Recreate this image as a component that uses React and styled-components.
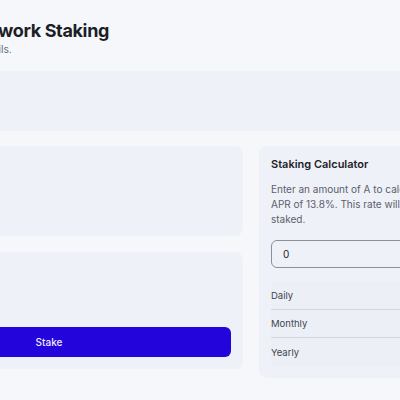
import React from 'react';
import styled, { createGlobalStyle } from 'styled-components';

const GlobalStyle = createGlobalStyle`
  html, body {
    margin: 0;
    padding: 0;
    background: #f6f7fb;
    overflow: hidden;
    font-family: Inter, "Noto Sans", sans-serif;
  }
`;

function App() {
  return <>
    <GlobalStyle />
    <Page>
      <Header>
        <Title>Cosmos Hub Network Staking</Title>
        <Subtitle>Stake A tokens and view details.</Subtitle>
      </Header>

      <Banner />

      <Columns>
        <Column>
          <Card $height="90px" />
          <Card $height="117px">
            <StakeButton>Stake</StakeButton>
          </Card>
        </Column>

        <Calculator>
          <CardTitle>Staking Calculator</CardTitle>
          <Description>
            Enter an amount of A to calculate your estimated rewards at the current<br />
            APR of 13.8%. This rate will change depending on the total amount of A<br />
            staked.
          </Description>
          <AmountInput defaultValue="0" />
          <Table>
            <Row><Label>Daily</Label><Value>0 A</Value></Row>
            <Row><Label>Monthly</Label><Value>0 A</Value></Row>
            <Row $last><Label>Yearly</Label><Value>0 A</Value></Row>
          </Table>
        </Calculator>
      </Columns>
    </Page>
  </>;
}

export default App;

const Page = styled.div`
  width: 816px;
  margin-left: -157px;
  padding: 20px 12px;
  box-sizing: border-box;
`

const Header = styled.div`
  margin-bottom: 15px;
`

const Title = styled.h1`
  margin: 0;
  font-size: 18px;
  line-height: 22px;
  font-weight: 700;
  letter-spacing: -0.35px;
  color: #1c1f26;
  white-space: nowrap;
`

const Subtitle = styled.p`
  margin: 0;
  font-size: 10.3px;
  line-height: 14px;
  color: #6b7079;
  white-space: nowrap;
`

const Banner = styled.div`
  height: 60px;
  border-radius: 8px;
  background: #eef1f8;
  margin-bottom: 15px;
`

const Columns = styled.div`
  display: grid;
  grid-template-columns: 388px 388px;
  gap: 16px;
  align-items: start;
`

const Column = styled.div`
  display: flex;
  flex-direction: column;
  gap: 16px;
`

const Card = styled.div`
  height: ${p => p.$height};
  box-sizing: border-box;
  border-radius: 8px;
  background: #eef1f8;
  padding: 12px;
  display: flex;
  flex-direction: column;
  justify-content: flex-end;
`

const StakeButton = styled.button`
  height: 30px;
  border: none;
  border-radius: 6px;
  background: #2305dc;
  color: #efeaff;
  font-family: Inter, sans-serif;
  font-size: 10px;
  font-weight: 500;
  cursor: pointer;
`

const Calculator = styled.div`
  border-radius: 8px;
  background: #eef1f8;
  padding: 10px 12px 12px;
  display: flex;
  flex-direction: column;
`

const CardTitle = styled.h2`
  margin: 0 0 10px;
  font-size: 11px;
  line-height: 16px;
  font-weight: 600;
  color: #1f2329;
`

const Description = styled.p`
  margin: 0 0 13px;
  font-size: 10px;
  line-height: 15px;
  color: #5b606a;
  white-space: nowrap;
`

const AmountInput = styled.input`
  height: 28px;
  box-sizing: border-box;
  border: 1px solid #8c8f97;
  border-radius: 6px;
  background: transparent;
  padding: 0 11px;
  font-family: Inter, sans-serif;
  font-size: 10px;
  color: #1f2329;
  margin-bottom: 14px;
  outline: none;
`

const Table = styled.div`
  display: flex;
  flex-direction: column;
  background: #eceff6;
`

const Row = styled.div`
  height: 28px;
  box-sizing: border-box;
  display: flex;
  align-items: center;
  justify-content: space-between;
  border-bottom: ${p => p.$last ? 'none' : '1px solid #d4d7df'};
`

const Label = styled.span`
  font-size: 9.5px;
  color: #41454d;
`

const Value = styled.span`
  font-size: 9.5px;
  color: #41454d;
`
